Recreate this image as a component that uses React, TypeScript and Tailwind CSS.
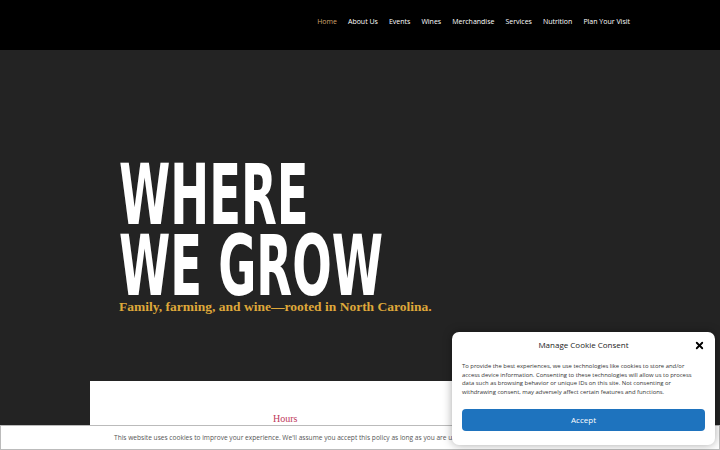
import { X } from 'lucide-react';

const navItems = ['Home', 'About Us', 'Events', 'Wines', 'Merchandise', 'Services', 'Nutrition', 'Plan Your Visit'];

const Header = () => (
  <header className="h-[50px] bg-black">
    <nav className="flex h-full items-center justify-end gap-[11px] pr-[90px] pb-[5px] text-[7px] font-['Open_Sans',sans-serif]">
      {navItems.map((item, i) => (
        <a key={item} className={i === 0 ? 'text-[#d0a46e]' : 'text-white'}>
          {item}
        </a>
      ))}
    </nav>
  </header>
);

const Hero = () => (
  <section className="bg-[#232323] pt-[110px] pl-[119px]">
    <h1 className="origin-left scale-x-[0.615] text-[84px] leading-[71px] font-bold text-white font-['DejaVu_Sans_Condensed','DejaVu_Sans',sans-serif]">
      <span className="block">WHERE</span>
      <span className="block">WE GROW</span>
    </h1>
    <p className="-mt-[5px] text-[13.5px] leading-[20px] font-bold text-[#dfa83a] font-['Liberation_Serif',serif]">
      Family, farming, and wine—rooted in North Carolina.
    </p>
    <div className="h-[64px]" />
  </section>
);

const ConsentModal = () => (
  <div className="absolute top-[332px] left-[452px] w-[263px] rounded-[7px] bg-white px-[10px] pt-[8px] pb-[14px] shadow-[0_0_10px_rgba(0,0,0,0.35)] font-['Open_Sans',sans-serif]">
    <div className="relative flex h-[10px] items-center justify-center">
      <span className="text-[8px] text-[#222]">Manage Cookie Consent</span>
      <X className="absolute top-[0px] right-[0px] h-[11px] w-[11px] text-black" strokeWidth={4} />
    </div>
    <p className="mt-[12px] whitespace-nowrap text-[5.9px] leading-[8.7px] text-[#333]">
      To provide the best experiences, we use technologies like cookies to store and/or
      <br />
      access device information. Consenting to these technologies will allow us to process
      <br />
      data such as browsing behavior or unique IDs on this site. Not consenting or
      <br />
      withdrawing consent, may adversely affect certain features and functions.
    </p>
    <button className="mt-[12px] flex h-[22px] w-full items-center justify-center rounded-[4px] bg-[#1e73be] text-[8px] text-white">
      Accept
    </button>
  </div>
);

export default function App() {
  return (
    <div className="relative h-[450px] w-[720px] overflow-hidden bg-[#232323]">
      <Header />
      <Hero />
      <div className="ml-[90px] h-[100px] w-[540px] bg-white pt-[32px] pl-[183px]">
        <p className="text-[10px] leading-[12px] text-[#c0395a] font-['Liberation_Serif',serif]">Hours</p>
      </div>
      <div className="absolute bottom-0 left-0 flex h-[25px] w-[720px] items-center border border-[#bbb] bg-white pl-[113px] font-['Open_Sans',sans-serif]">
        <span className="whitespace-nowrap text-[6.6px] text-[#555]">
          This website uses cookies to improve your experience. We'll assume you accept this policy as long as you are using this website
        </span>
      </div>
      <ConsentModal />
    </div>
  );
}
